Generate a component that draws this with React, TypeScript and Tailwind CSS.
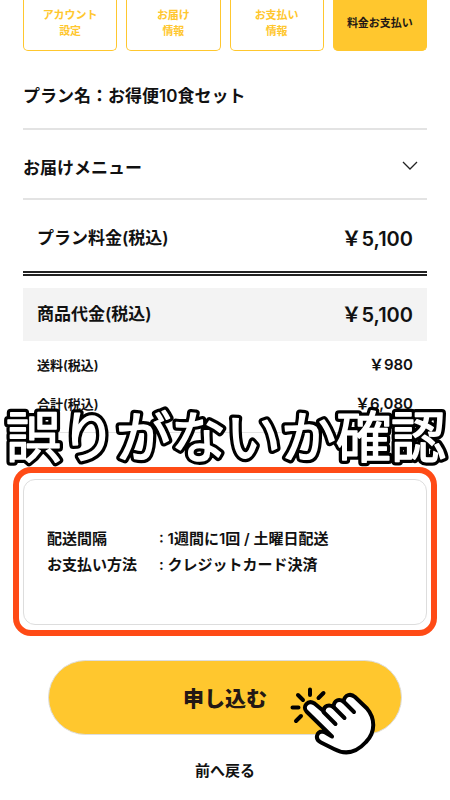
import React, { FC } from 'react';
import clsx from 'clsx';

interface IPrice {
  label: string;
  price: string;
}

const steps = [['アカウント', '設定'], ['お届け', '情報'], ['お支払い', '情報'], ['料金お支払い']];
const fees: IPrice[] = [
  { label: '送料(税込)', price: '￥980' },
  { label: '合計(税込)', price: '￥6,080' },
];
const details = [
  { label: '配送間隔', value: '1週間に1回 / 土曜日配送' },
  { label: 'お支払い方法', value: 'クレジットカード決済' },
];

const StepBar: FC = () => (
  <ol className="grid grid-cols-4 gap-[9px]">
    {steps.map((lines, index) => (
      <li
        key={lines.join('')}
        className={clsx(
          'flex h-[51px] flex-col items-center justify-center rounded-b-[5px] border border-t-0 border-[#ffc72e] pb-[5px] text-[11px] leading-4',
          index === 3 ? 'bg-[#ffc72e] text-[#231815]' : 'text-[#ffc72e]',
        )}
      >
        {lines.map(line => <span key={line}>{line}</span>)}
      </li>
    ))}
  </ol>
);

const TotalRow: FC<IPrice & { className?: string }> = ({ label, price, className }) => (
  <div className={clsx('flex items-center justify-between px-[14px]', className)}>
    <dt className="text-[17px]">{label}</dt>
    <dd className="text-[20px]">{price}</dd>
  </div>
);

// 縁取り文字
const Caption: FC = () => (
  <svg
    className="pointer-events-none absolute top-[58px] left-1/2 h-[72px] w-[450px] -translate-x-1/2 text-[55px] font-normal"
    viewBox="0 0 450 72"
    strokeLinejoin="round"
    strokeLinecap="round"
  >
    <g stroke="#000" strokeWidth="8">
      <text id="caption" x="226" y="58" textAnchor="middle">誤りがないか確認</text>
    </g>
    <g fill="#fff" stroke="#fff" strokeWidth="1.500">
      <use href="#caption" />
    </g>
  </svg>
);

const TapHand: FC = () => (
  <svg
    className="pointer-events-none absolute top-[26px] right-[26px] h-[72px] w-[88px]"
    viewBox="0 0 88 72"
    fill="none"
    stroke="#000"
    strokeWidth="4"
    strokeLinecap="round"
    strokeLinejoin="round"
    aria-hidden="true"
  >
    <path d="M22 3.500v5.500M10 9l5 5M35.500 7l-5 5M4.500 21.500h6M13 30l-5 5" />
    <path
      fill="#fff"
      d="M44 50.500 L18.500 25.500 C14 20.500 20 13.500 26.500 17.500 L35.500 25 C36 19.500 41 18 45.500 21 C46 14 51 12.500 55.500 15.500 C57 8 63 7.500 67 11 L79 22.500 C87 32 88 46 78 56 C68 67 57 69 46 63 L33 56.500 C26 53 29 45.500 34.500 45.500 C37.500 46 41 49 44 50.500 Z"
    />
    <path d="M35.500 26L47.500 38M45.500 21L56.500 32M55.500 15.500L66 26" />
  </svg>
);

const App: FC = () => (
  <main className="min-h-screen overflow-hidden bg-white px-[23px] pb-4 font-['Inter','Noto_Sans_CJK_JP',sans-serif] font-semibold text-[#111]">
    <StepBar />
    <h1 className="border-b-2 border-[#e3e3e3] pt-[32px] pb-[19px] text-[17px] leading-[26px]">
      プラン名：お得便10食セット
    </h1>
    <button
      type="button"
      className="flex h-[70px] w-full items-center justify-between border-b-2 border-[#e3e3e3] pt-[10px] pr-[9px] text-[17px]"
    >
      お届けメニュー
      <svg className="mb-2 h-[9px] w-[16px]" viewBox="0 0 16 9" fill="none" stroke="#222" strokeWidth="1.300" aria-hidden="true">
        <path d="M1 1l7 7 7-7" />
      </svg>
    </button>
    <dl>
      <TotalRow label="プラン料金(税込)" price="￥5,100" className="h-[76px] border-b-[5px] border-double border-[#222] pt-[6px]" />
      <TotalRow label="商品代金(税込)" price="￥5,100" className="mt-3 h-[53px] bg-[#f3f3f3]" />
      {fees.map(item => (
        <div key={item.label} className="flex h-[39px] items-center justify-between px-[14px] pt-[10px]">
          <dt className="text-[13px]">{item.label}</dt>
          <dd className="text-[15px]">{item.price}</dd>
        </div>
      ))}
    </dl>
    <div className="relative -mt-[78px] h-[92px] border-b border-[#e3e3e3]">
      <Caption />
    </div>
    <section className="-mx-[10px] mt-[34px] rounded-[18px] border-[6px] border-[#ff4b16] px-1 pt-[6px] pb-[5px]">
      <dl className="flex h-[146px] flex-col justify-center rounded-[12px] border border-[#ddd] px-[23px] text-[15px] leading-[26px]">
        {details.map(item => (
          <div key={item.label} className="flex">
            <dt className="w-28 shrink-0">{item.label}</dt>
            <dd>: {item.value}</dd>
          </div>
        ))}
      </dl>
    </section>
    <div className="relative mx-[25px] mt-6">
      <button type="button" className="h-[75px] w-full rounded-full border border-[#ddd] bg-[#ffc72e] pt-[3px] text-[21px] font-black text-[#231815]">
        申し込む
      </button>
      <TapHand />
    </div>
    <a href="#" className="mx-auto mt-[23px] block w-fit text-[15px] leading-[26px]">前へ戻る</a>
  </main>
);

export default App;
